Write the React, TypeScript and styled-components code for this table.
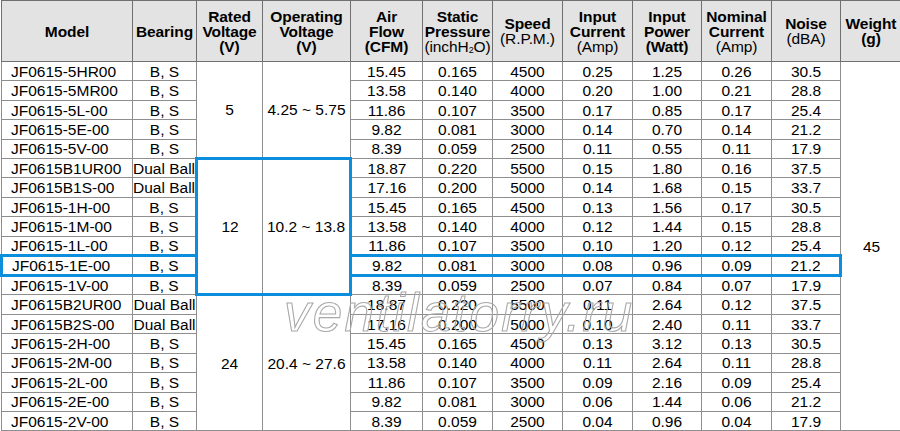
import React from "react";
import styled, { createGlobalStyle } from "styled-components";

const BLUE = "#0b8fdc";
const BLUE_LINE = `3px solid ${BLUE}`;

const GlobalStyle = createGlobalStyle`
  html, body { margin: 0; padding: 0; background: #ffffff; }
`;

const Wrapper = styled.div`
  position: relative;
  width: 900px;
  height: 431px;
  overflow: hidden;
  background: #ffffff;
`;

const Table = styled.table`
  border-collapse: collapse;
  table-layout: fixed;
  width: 900px;
  font-family: "Liberation Sans", Arial, Helvetica, sans-serif;
  color: #000;
`;

const HeadRow = styled.tr`
  height: 61px;
`;

const BodyRow = styled.tr`
  height: 19.42px;
`;

const Th = styled.th`
  background: #e3e3e3;
  border: 1px solid #707070;
  font-weight: bold;
  font-size: 15.5px;
  line-height: 15px;
  padding: 0;
  text-align: center;
  vertical-align: middle;
  white-space: nowrap;
  letter-spacing: -0.1px;
`;

const Unit = styled.span<{ $light?: boolean }>`
  font-weight: ${(p) => (p.$light ? "normal" : "bold")};
`;

const Sub = styled.sub`
  font-size: 9px;
  vertical-align: -1px;
  line-height: 0;
`;

type Edges = { $t?: boolean; $b?: boolean; $l?: boolean; $r?: boolean };

const Td = styled.td<Edges & { $left?: boolean }>`
  border: 1px solid #8e8e8e;
  ${(p) => (p.$t ? `border-top: ${BLUE_LINE};` : "")}
  ${(p) => (p.$b ? `border-bottom: ${BLUE_LINE};` : "")}
  ${(p) => (p.$l ? `border-left: ${BLUE_LINE};` : "")}
  ${(p) => (p.$r ? `border-right: ${BLUE_LINE};` : "")}
  font-size: 15.5px;
  line-height: 17px;
  padding: ${(p) => (p.$left ? "0 0 0 9px" : "0")};
  text-align: ${(p) => (p.$left ? "left" : "center")};
  vertical-align: middle;
  white-space: nowrap;
  overflow: hidden;
`;

const Watermark = styled.span`
  position: absolute;
  left: 284px;
  top: 286px;
  font-family: "Liberation Sans", Arial, sans-serif;
  font-style: italic;
  font-size: 53px;
  line-height: 53px;
  letter-spacing: 2.2px;
  color: transparent;
  -webkit-text-stroke: 1.1px #a9a9a9;
  pointer-events: none;
  user-select: none;
`;

type Row = [string, string, string, string, string, string, string, string, string];

const groups: { rated: string; op: string; highlight?: boolean; rows: Row[] }[] = [
  {
    rated: "5",
    op: "4.25 ~ 5.75",
    rows: [
      ["JF0615-5HR00", "B, S", "15.45", "0.165", "4500", "0.25", "1.25", "0.26", "30.5"],
      ["JF0615-5MR00", "B, S", "13.58", "0.140", "4000", "0.20", "1.00", "0.21", "28.8"],
      ["JF0615-5L-00", "B, S", "11.86", "0.107", "3500", "0.17", "0.85", "0.17", "25.4"],
      ["JF0615-5E-00", "B, S", "9.82", "0.081", "3000", "0.14", "0.70", "0.14", "21.2"],
      ["JF0615-5V-00", "B, S", "8.39", "0.059", "2500", "0.11", "0.55", "0.11", "17.9"],
    ],
  },
  {
    rated: "12",
    op: "10.2 ~ 13.8",
    highlight: true,
    rows: [
      ["JF0615B1UR00", "Dual Ball", "18.87", "0.220", "5500", "0.15", "1.80", "0.16", "37.5"],
      ["JF0615B1S-00", "Dual Ball", "17.16", "0.200", "5000", "0.14", "1.68", "0.15", "33.7"],
      ["JF0615-1H-00", "B, S", "15.45", "0.165", "4500", "0.13", "1.56", "0.17", "30.5"],
      ["JF0615-1M-00", "B, S", "13.58", "0.140", "4000", "0.12", "1.44", "0.15", "28.8"],
      ["JF0615-1L-00", "B, S", "11.86", "0.107", "3500", "0.10", "1.20", "0.12", "25.4"],
      ["JF0615-1E-00", "B, S", "9.82", "0.081", "3000", "0.08", "0.96", "0.09", "21.2"],
      ["JF0615-1V-00", "B, S", "8.39", "0.059", "2500", "0.07", "0.84", "0.07", "17.9"],
    ],
  },
  {
    rated: "24",
    op: "20.4 ~ 27.6",
    rows: [
      ["JF0615B2UR00", "Dual Ball", "18.87", "0.220", "5500", "0.11", "2.64", "0.12", "37.5"],
      ["JF0615B2S-00", "Dual Ball", "17.16", "0.200", "5000", "0.10", "2.40", "0.11", "33.7"],
      ["JF0615-2H-00", "B, S", "15.45", "0.165", "4500", "0.13", "3.12", "0.13", "30.5"],
      ["JF0615-2M-00", "B, S", "13.58", "0.140", "4000", "0.11", "2.64", "0.11", "28.8"],
      ["JF0615-2L-00", "B, S", "11.86", "0.107", "3500", "0.09", "2.16", "0.09", "25.4"],
      ["JF0615-2E-00", "B, S", "9.82", "0.081", "3000", "0.06", "1.44", "0.06", "21.2"],
      ["JF0615-2V-00", "B, S", "8.39", "0.059", "2500", "0.04", "0.96", "0.04", "17.9"],
    ],
  },
];

const HIGHLIGHT_MODEL = "JF0615-1E-00";
const colWidths = [131, 64, 66, 88, 72, 70, 70, 70, 69, 70, 69, 61];
const totalRows = groups.reduce((n, g) => n + g.rows.length, 0);

export default function App() {
  let first = true;
  return (
    <Wrapper>
      <GlobalStyle />
      <Table>
        <colgroup>
          {colWidths.map((w, i) => (
            <col key={i} style={{ width: w }} />
          ))}
        </colgroup>
        <thead>
          <HeadRow>
            <Th>Model</Th>
            <Th>Bearing</Th>
            <Th>
              Rated
              <br />
              Voltage
              <br />
              <Unit>(V)</Unit>
            </Th>
            <Th>
              Operating
              <br />
              Voltage
              <br />
              <Unit>(V)</Unit>
            </Th>
            <Th>
              Air
              <br />
              Flow
              <br />
              <Unit>(CFM)</Unit>
            </Th>
            <Th>
              Static
              <br />
              Pressure
              <br />
              <Unit $light>
                (inchH<Sub>2</Sub>O)
              </Unit>
            </Th>
            <Th>
              Speed
              <br />
              <Unit $light>(R.P.M.)</Unit>
            </Th>
            <Th>
              Input
              <br />
              Current
              <br />
              <Unit $light>(Amp)</Unit>
            </Th>
            <Th>
              Input
              <br />
              Power
              <br />
              <Unit>(Watt)</Unit>
            </Th>
            <Th>
              Nominal
              <br />
              Current
              <br />
              <Unit $light>(Amp)</Unit>
            </Th>
            <Th>
              Noise
              <br />
              <Unit $light>(dBA)</Unit>
            </Th>
            <Th>
              Weight
              <br />
              <Unit>(g)</Unit>
            </Th>
          </HeadRow>
        </thead>
        <tbody>
          {groups.map((g) =>
            g.rows.map((r, i) => {
              const hl = r[0] === HIGHLIGHT_MODEL;
              const isFirstOverall = first;
              first = false;
              const vals = r.slice(2);
              return (
                <BodyRow key={r[0]}>
                  <Td $left $t={hl} $b={hl} $l={hl}>
                    {r[0]}
                  </Td>
                  <Td $t={hl} $b={hl} $r={hl}>
                    {r[1]}
                  </Td>
                  {i === 0 && (
                    <>
                      <Td rowSpan={g.rows.length} $t={g.highlight} $b={g.highlight} $l={g.highlight}>
                        {g.rated}
                      </Td>
                      <Td rowSpan={g.rows.length} $t={g.highlight} $b={g.highlight} $r={g.highlight}>
                        {g.op}
                      </Td>
                    </>
                  )}
                  {vals.map((v, j) => (
                    <Td
                      key={j}
                      $t={hl}
                      $b={hl}
                      $l={hl && j === 0}
                      $r={hl && j === vals.length - 1}
                    >
                      {v}
                    </Td>
                  ))}
                  {isFirstOverall && <Td rowSpan={totalRows}>45</Td>}
                </BodyRow>
              );
            })
          )}
        </tbody>
      </Table>
      <Watermark>ventilatorry.ru</Watermark>
    </Wrapper>
  );
}
